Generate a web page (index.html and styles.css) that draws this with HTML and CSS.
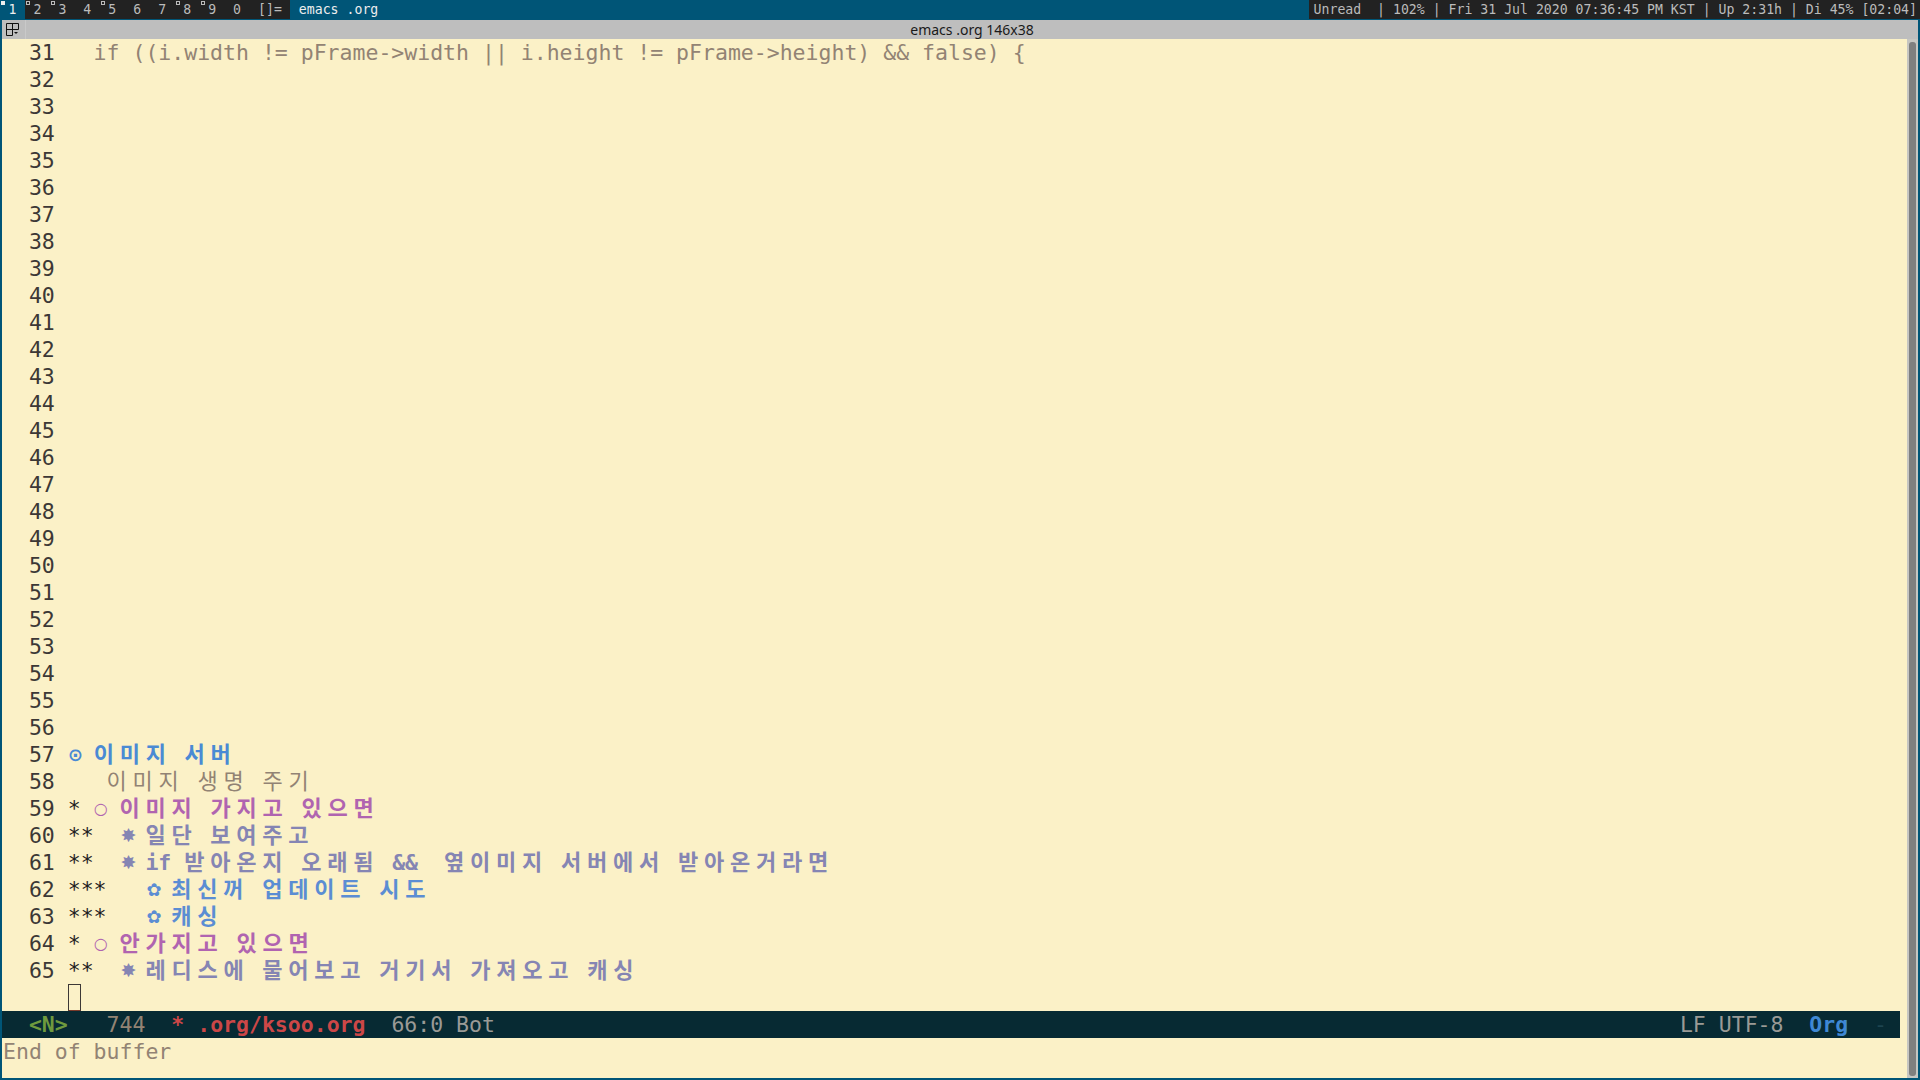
FILE: index.html
```html
<!DOCTYPE html>
<html lang="ko">
<head>
<meta charset="utf-8">
<title>emacs .org</title>
<link rel="stylesheet" href="styles.css">
</head>
<body>
<div class="topbar">
  <div class="tag sel"><span class="ind fill"></span>1</div>
  <div class="tag"><span class="ind"></span>2</div>
  <div class="tag"><span class="ind"></span>3</div>
  <div class="tag">4</div>
  <div class="tag"><span class="ind"></span>5</div>
  <div class="tag">6</div>
  <div class="tag">7</div>
  <div class="tag"><span class="ind"></span>8</div>
  <div class="tag"><span class="ind"></span>9</div>
  <div class="tag">0</div>
  <div class="tag">[]=</div>
  <div class="wtitle">emacs .org</div>
  <div class="status">Unread  | 102% | Fri 31 Jul 2020 07:36:45 PM KST | Up 2:31h | Di 45% [02:04]</div>
</div>
<div class="window">
  <div class="titlebar">
    <div class="menubtn">
      <svg width="13" height="13" viewBox="0 0 13 13">
        <path d="M0.5 12.5 V0.5 H12.5 V6.5 M0.5 6.5 H12.5 M6.5 0.5 V12.5 M0.5 12.5 H6.5" fill="none" stroke="#111" stroke-width="1"/>
        <path d="M8 9 H12 L10 11 Z" fill="#111"/>
      </svg>
    </div>
    <div class="ttext">emacs .org 146x38</div>
  </div>
  <div class="frame">
    <div class="emacs">
      <div class="buffer">
        <div class="ln"><span class="num">  31 </span><span class="code">  if ((i.width != pFrame-&gt;width || i.height != pFrame-&gt;height) &amp;&amp; false) {</span></div>
        <div class="ln"><span class="num">  32 </span></div>
        <div class="ln"><span class="num">  33 </span></div>
        <div class="ln"><span class="num">  34 </span></div>
        <div class="ln"><span class="num">  35 </span></div>
        <div class="ln"><span class="num">  36 </span></div>
        <div class="ln"><span class="num">  37 </span></div>
        <div class="ln"><span class="num">  38 </span></div>
        <div class="ln"><span class="num">  39 </span></div>
        <div class="ln"><span class="num">  40 </span></div>
        <div class="ln"><span class="num">  41 </span></div>
        <div class="ln"><span class="num">  42 </span></div>
        <div class="ln"><span class="num">  43 </span></div>
        <div class="ln"><span class="num">  44 </span></div>
        <div class="ln"><span class="num">  45 </span></div>
        <div class="ln"><span class="num">  46 </span></div>
        <div class="ln"><span class="num">  47 </span></div>
        <div class="ln"><span class="num">  48 </span></div>
        <div class="ln"><span class="num">  49 </span></div>
        <div class="ln"><span class="num">  50 </span></div>
        <div class="ln"><span class="num">  51 </span></div>
        <div class="ln"><span class="num">  52 </span></div>
        <div class="ln"><span class="num">  53 </span></div>
        <div class="ln"><span class="num">  54 </span></div>
        <div class="ln"><span class="num">  55 </span></div>
        <div class="ln"><span class="num">  56 </span></div>
        <div class="ln"><span class="num">  57 </span><span class="h1"><span class="sym w1 dot">⊙</span> <span class="k">이미지</span> <span class="k">서버</span></span></div>
        <div class="ln"><span class="num">  58 </span><span class="muted">   <span class="k">이미지</span> <span class="k">생명</span> <span class="k">주기</span></span></div>
        <div class="ln"><span class="num">  59 </span><span class="star">*</span> <span class="hp"><span class="sym w1 circ">○</span> <span class="k">이미지</span> <span class="k">가지고</span> <span class="k">있으면</span></span></div>
        <div class="ln"><span class="num">  60 </span><span class="star">**</span>  <span class="h2"><span class="sym w2 st8">✸</span><span class="k">일단</span> <span class="k">보여주고</span></span></div>
        <div class="ln"><span class="num">  61 </span><span class="star">**</span>  <span class="h2"><span class="sym w2 st8">✸</span>if <span class="k">받아온지</span> <span class="k">오래됨</span> &amp;&amp;  <span class="k">옆이미지</span> <span class="k">서버에서</span> <span class="k">받아온거라면</span></span></div>
        <div class="ln"><span class="num">  62 </span><span class="star">***</span>   <span class="h3"><span class="sym w2 flw">✿</span><span class="k">최신꺼</span> <span class="k">업데이트</span> <span class="k">시도</span></span></div>
        <div class="ln"><span class="num">  63 </span><span class="star">***</span>   <span class="h3"><span class="sym w2 flw">✿</span><span class="k">캐싱</span></span></div>
        <div class="ln"><span class="num">  64 </span><span class="star">*</span> <span class="hp"><span class="sym w1 circ">○</span> <span class="k">안가지고</span> <span class="k">있으면</span></span></div>
        <div class="ln"><span class="num">  65 </span><span class="star">**</span>  <span class="h2"><span class="sym w2 st8">✸</span><span class="k">레디스에</span> <span class="k">물어보고</span> <span class="k">거기서</span> <span class="k">가져오고</span> <span class="k">캐싱</span></span></div>
        <div class="ln"><span class="num">     </span><span class="cursor"></span></div>
      </div>
      <div class="modeline">
        <span class="ml-left">  <span class="ev">&lt;N&gt;</span>   <span class="mg">744</span>  <span class="bf">* .org/ksoo.org</span>  <span class="mg2">66:0 Bot</span></span>
        <span class="ml-right"><span class="mg2">LF UTF-8</span>  <span class="mode">Org</span>  <span class="dash">-</span> </span>
      </div>
      <div class="echo">End of buffer</div>
    </div>
    <div class="scrollbar"><div class="thumb"></div></div>
  </div>
</div>
</body>
</html>
```
FILE: styles.css
```css
* { box-sizing: border-box; }
html, body { margin: 0; padding: 0; }
body {
  width: 1920px;
  height: 1080px;
  overflow: hidden;
  background: #222222;
}

/* ---- dwm bar ---- */
.topbar {
  display: flex;
  height: 19px;
  background: #222222;
  color: #bbbbbb;
  font-family: "DejaVu Sans Mono", monospace;
  font-size: 13.2px;
  line-height: 19px;
  white-space: pre;
}
.tag {
  position: relative;
  padding: 0 8.5px;
}
.tag.sel { background: #005577; color: #eeeeee; }
.ind {
  position: absolute;
  left: 1px;
  top: 1px;
  width: 4px;
  height: 4px;
  border: 1px solid #bbbbbb;
}
.ind.fill { background: #eeeeee; border-color: #eeeeee; }
.wtitle {
  flex: 1;
  background: #005577;
  color: #eeeeee;
  padding-left: 8.5px;
}
.status {
  padding: 0 3px 0 5px;
}

/* ---- window ---- */
.window {
  height: 1061px;
  border: 2px solid #005577;
  border-top-width: 1px;
  display: flex;
  flex-direction: column;
}
.titlebar {
  height: 19px;
  background: #bebebe;
  display: flex;
  align-items: center;
}
.menubtn {
  width: 24px;
  height: 19px;
  display: flex;
  align-items: center;
  justify-content: center;
  padding-right: 2px;
  border-right: 1px solid #c9c9c9;
}
.menubtn svg { display: block; }
.ttext {
  flex: 1;
  text-align: center;
  font-family: "Noto Sans", "DejaVu Sans", sans-serif;
  font-size: 14px;
  color: #1a1a1a;
}

.frame {
  flex: 1;
  display: flex;
  background: #fbf1c7;
}
.emacs {
  flex: 1;
  font-family: "DejaVu Sans Mono", monospace;
  font-size: 21.5px;
  color: #3c3836;
}
.buffer { padding-left: 1px; }
.ln {
  height: 27px;
  line-height: 27px;
  white-space: pre;
  overflow: visible;
}
.num { color: #3c3836; }
.code { color: #928374; }
.muted { color: #928374; }
.star { color: #1d2021; }
.h1 { color: #4a8ad4; font-weight: bold; }
.hp { color: #b064b0; font-weight: bold; }
.h2 { color: #8585b3; font-weight: bold; }
.h3 { color: #5b8dd3; font-weight: bold; }

.k {
  font-family: "Noto Sans CJK KR", "DejaVu Sans", sans-serif;
  font-size: 22px;
  letter-spacing: 5.76px;
  line-height: 0;
}
.muted .k { font-weight: normal; }
.sym {
  display: inline-block;
  font-family: "DejaVu Sans", "DejaVu Sans Mono", sans-serif;
  font-weight: normal;
  line-height: 27px;
  height: 27px;
  vertical-align: top;
}
.w1 { width: 12.944px; text-align: center; }
.w2 { width: 25.888px; }
.dot { font-size: 18px; font-weight: bold; }
.circ { font-size: 16px; font-weight: bold; }
.st8 { font-size: 19px; padding-left: 1px; }
.flw { font-size: 18px; padding-left: 1px; }

.cursor {
  display: inline-block;
  width: 13px;
  height: 27px;
  vertical-align: top;
  border: 1px solid #3c3836;
  border-bottom-color: #7a3a2a;
}

.modeline {
  width: calc(100% - 7px);
  height: 27px;
  line-height: 27px;
  background: #072a33;
  padding-left: 1px;
  display: flex;
  justify-content: space-between;
  white-space: pre;
  color: #928374;
}
.ev { color: #6f9a3e; font-weight: bold; }
.mg { color: #928374; }
.bf { color: #cc4747; font-weight: bold; }
.mg2 { color: #9a9a96; }
.mode { color: #3f88d4; font-weight: bold; }
.dash { color: #1d4450; }

.echo {
  height: 27px;
  line-height: 27px;
  padding-left: 1px;
  white-space: pre;
  color: #928374;
}

.scrollbar {
  width: 11px;
  background: #c6c6c2;
  padding: 3px 2px 2px 2px;
}
.thumb {
  height: 100%;
  background: #7f7f7f;
  border-radius: 3px;
}
```
